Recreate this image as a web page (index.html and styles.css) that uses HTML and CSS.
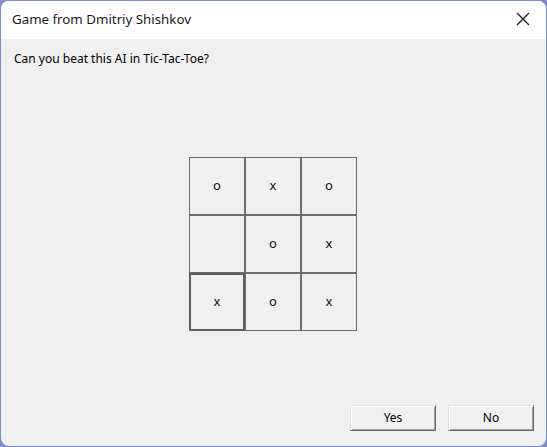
FILE: index.html
```html
<!DOCTYPE html>
<html>
<head>
<meta charset="utf-8">
<link rel="stylesheet" href="styles.css">
</head>
<body>
<div class="window">
  <div class="titlebar">
    <span class="title">Game from Dmitriy Shishkov</span>
    <svg class="close" width="14" height="14" viewBox="0 0 14 14"><path d="M1 1 L13 13 M13 1 L1 13" stroke="#1a1a1a" stroke-width="1.3" fill="none"/></svg>
  </div>
  <div class="content">
    <p class="message">Can you beat this AI in Tic-Tac-Toe?</p>
    <div class="board">
      <button class="cell">o</button>
      <button class="cell">x</button>
      <button class="cell">o</button>
      <button class="cell"></button>
      <button class="cell">o</button>
      <button class="cell">x</button>
      <button class="cell focused">x</button>
      <button class="cell">o</button>
      <button class="cell">x</button>
    </div>
    <div class="actions">
      <button class="btn">Yes</button>
      <button class="btn">No</button>
    </div>
  </div>
</div>
</body>
</html>
```
FILE: styles.css
```css
html, body {
  margin: 0;
  padding: 0;
  background: #7d8ccc;
  width: 547px;
  height: 447px;
  overflow: hidden;
}
.window {
  margin: 1px 0 0 1px;
  width: 545px;
  height: 445px;
  border-radius: 8px;
  overflow: hidden;
  display: flex;
  flex-direction: column;
  background: #f0f0f0;
  font-family: "Noto Sans", "Liberation Sans", sans-serif;
}
.titlebar {
  height: 38px;
  background: #ffffff;
  display: flex;
  align-items: center;
  justify-content: space-between;
  padding: 0 16px 0 11px;
  flex-shrink: 0;
}
.title {
  font-size: 13.3px;
  color: #1a1a1a;
  margin-top: -2px;
}
.close {
  margin-top: -2px;
}
.content {
  flex: 1;
  display: flex;
  flex-direction: column;
}
.message {
  margin: 12px 0 0 13px;
  font-size: 12px;
  color: #000;
  line-height: 16px;
}
.board {
  margin: 90px 0 0 188px;
  display: grid;
  grid-template-columns: repeat(3, 56px);
  grid-template-rows: repeat(3, 58px);
  align-self: flex-start;
}
.cell {
  box-sizing: border-box;
  border: 1px solid #6b6b6b;
  background: #f0f0f0;
  font-family: "Noto Sans", sans-serif;
  font-weight: 400;
  font-size: 13px;
  color: #111;
  padding: 0 0 2px;
  margin: 0;
}
.cell.focused {
  border: 2px solid #5e5e5e;
}
.actions {
  margin-top: auto;
  display: flex;
  justify-content: flex-end;
  gap: 12px;
  padding: 0 12px 15px 0;
}
.btn {
  box-sizing: border-box;
  width: 86px;
  height: 26px;
  background: #f0f0f0;
  border: 1px solid;
  border-color: #e3e3e3 #696969 #696969 #e3e3e3;
  box-shadow: inset 1px 1px #ffffff, inset -1px -1px #a0a0a0;
  font-family: "Noto Sans", sans-serif;
  font-size: 12px;
  color: #000;
  padding: 0 0 1px;
}
```
